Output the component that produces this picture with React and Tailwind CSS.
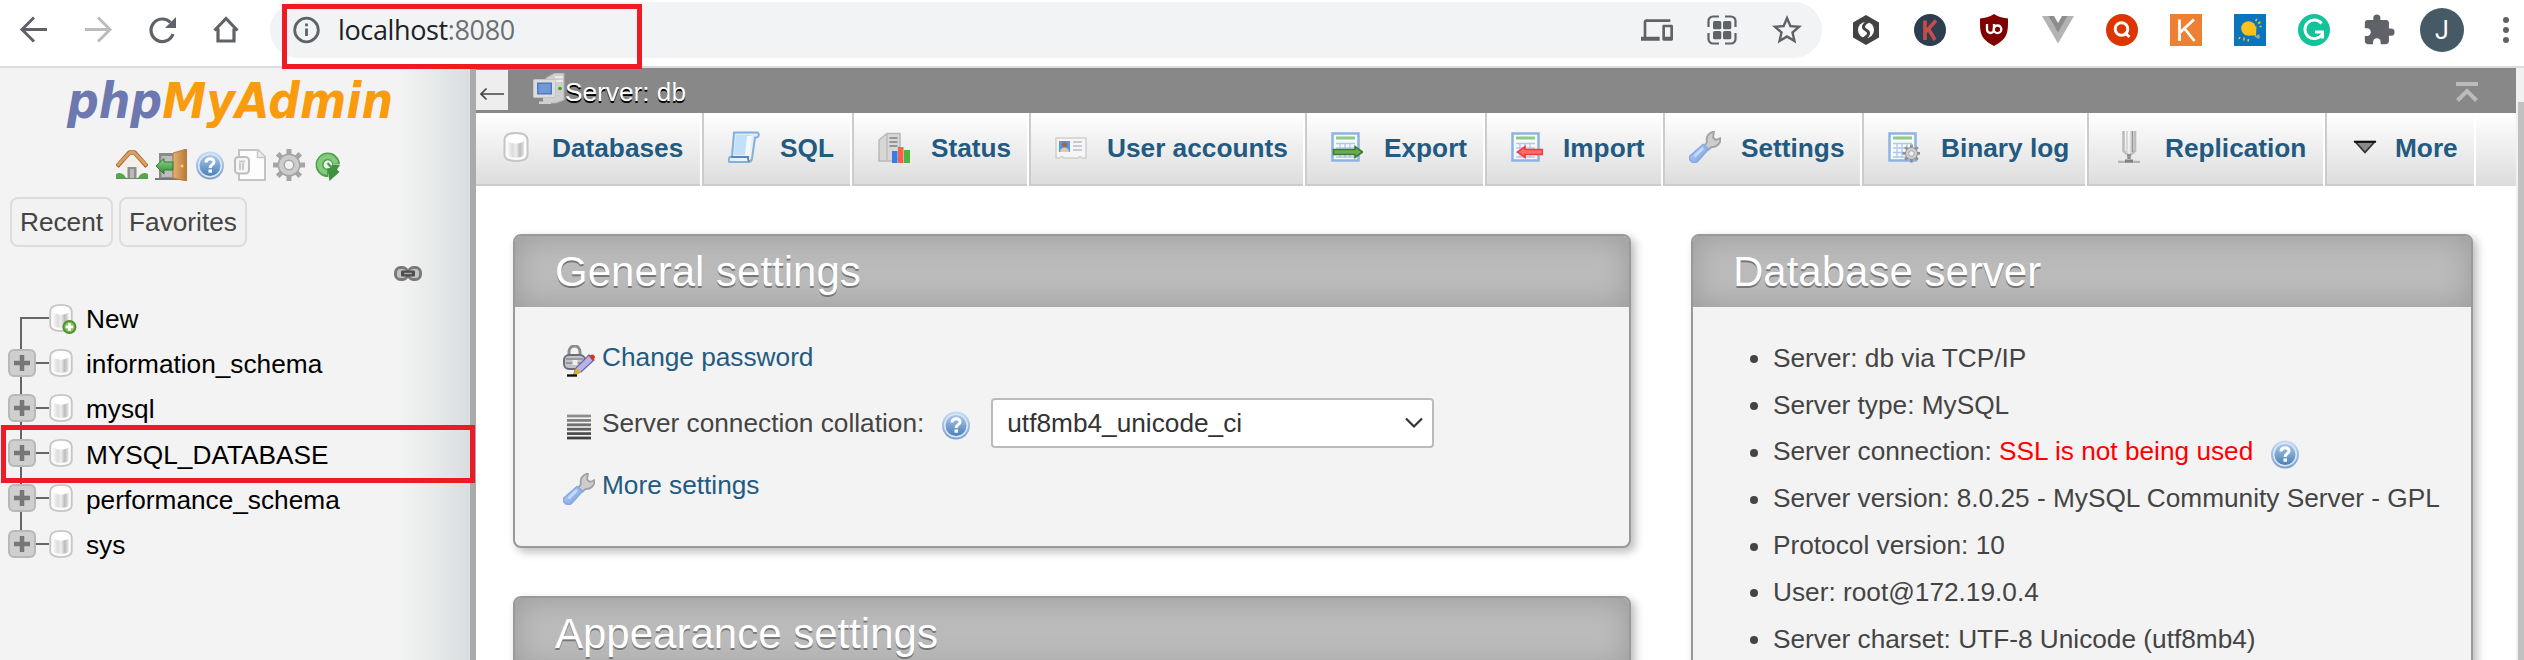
import React from "react";
import { MdExtension, MdOutlineStarBorder, MdDevices } from "react-icons/md";

/* ---------- shared gradients ---------- */
function Defs() {
  return (
    <svg width="0" height="0" className="absolute" aria-hidden="true">
      <defs>
        <linearGradient id="cyl" x1="0" x2="1" y1="0" y2="0">
          <stop offset="0" stopColor="#f4f4f4" />
          <stop offset="0.3" stopColor="#dcdcdc" />
          <stop offset="0.5" stopColor="#efefef" />
          <stop offset="0.75" stopColor="#bcbcbc" />
          <stop offset="1" stopColor="#e4e4e4" />
        </linearGradient>
        <linearGradient id="blueBall" x1="0" x2="0" y1="0" y2="1">
          <stop offset="0" stopColor="#a9c8ea" />
          <stop offset="1" stopColor="#4c80b8" />
        </linearGradient>
        <linearGradient id="blueRing" x1="0" x2="0" y1="0" y2="1">
          <stop offset="0" stopColor="#c6dcf6" />
          <stop offset="1" stopColor="#7d9fc9" />
        </linearGradient>
        <linearGradient id="wood" x1="0" x2="1" y1="0" y2="0">
          <stop offset="0" stopColor="#e5b077" />
          <stop offset="1" stopColor="#b97a35" />
        </linearGradient>
        <linearGradient id="green" x1="0" x2="0" y1="0" y2="1">
          <stop offset="0" stopColor="#8fd58a" />
          <stop offset="1" stopColor="#2f8a35" />
        </linearGradient>
        <linearGradient id="paper" x1="0" x2="1" y1="0" y2="1">
          <stop offset="0" stopColor="#cfe6fb" />
          <stop offset="1" stopColor="#f4faff" />
        </linearGradient>
        <linearGradient id="handle" x1="0" x2="1" y1="0" y2="1">
          <stop offset="0" stopColor="#c4d8f8" />
          <stop offset="1" stopColor="#6f9ae0" />
        </linearGradient>
      </defs>
    </svg>
  );
}

function Ico({ size = "size-8", className = "", children }) {
  return (
    <svg viewBox="0 0 32 32" className={`${size} shrink-0 ${className}`} fill="none">
      {children}
    </svg>
  );
}

/* ---------- phpMyAdmin icons ---------- */
function Cylinder() {
  return (
    <>
      <path d="M4.500 9c0-5 3.500-7 11.500-7s11.500 2 11.500 7v14.500c0 4.500-3.500 6.500-11.500 6.500s-11.500-2-11.500-6.500z" fill="#fbfbfb" stroke="#c6c6c6" strokeWidth="2" />
      <path d="M8 10v13c0 2.500 3 3.500 8 3.500s8-1 8-3.500V10z" fill="url(#cyl)" />
      <ellipse cx="16" cy="8.500" rx="8.500" ry="4" fill="#fff" />
    </>
  );
}
const DbIcon = () => (
  <Ico size="size-[30px]">
    <Cylinder />
  </Ico>
);
const DbTabIcon = () => (
  <Ico>
    <Cylinder />
  </Ico>
);
const DbNewIcon = () => (
  <Ico size="size-[30px]" className="overflow-visible">
    <Cylinder />
    <circle cx="25" cy="25.500" r="7.500" fill="#4f8f2c" />
    <circle cx="25" cy="25.500" r="5.500" fill="#86bf5e" />
    <path d="M25 21.500v8M21 25.500h8" stroke="#fff" strokeWidth="3" />
  </Ico>
);
const HelpIcon = () => (
  <Ico>
    <circle cx="16" cy="16.500" r="14" fill="url(#blueRing)" />
    <circle cx="16" cy="16.500" r="12" fill="#dbe8f7" />
    <circle cx="16" cy="16.500" r="10.500" fill="url(#blueBall)" />
    <path d="M12 13.500c0-5 8-5 8-.6 0 2.700-3.800 2.900-3.800 6" stroke="#fff" strokeWidth="3" />
    <rect x="14.500" y="20.500" width="3.500" height="3.200" fill="#fff" />
  </Ico>
);
const HomeIcon = () => (
  <Ico>
    <path d="M6 16 16 7l10 9v12H6z" fill="#f4efe8" />
    <path d="M11.500 18h9v11h-9z" fill="#8d8d8d" />
    <path d="M14 20h4v9h-4z" fill="#b9b9b9" />
    <path d="M0 25c3-2 6-1 8 1l3 4H0zM32 25c-3-2-6-1-8 1l-3 4h11z" fill="#52a84e" />
    <path d="M1 17.500 13.500 3.500h5L31 17.500" stroke="#a86a2c" strokeWidth="4.500" strokeLinejoin="round" />
    <path d="M1.500 16.500 13.800 3.500h4.400L30.500 16.500" stroke="#d9a066" strokeWidth="2.800" strokeLinejoin="round" />
    <path d="M0 29.500h32" stroke="#6b8d5d" strokeWidth="1" />
  </Ico>
);
const ExitIcon = () => (
  <Ico>
    <path d="M4 4h15v25H4z" fill="#8b8b8b" />
    <path d="M6.500 7h11v21h-11z" fill="#bdbdbd" />
    <path d="M0 30h32" stroke="#777" strokeWidth="2" />
    <path d="M18 4 31.500 0v32L18 29z" fill="url(#wood)" />
    <path d="M18 4 31.500 0v32L18 29z" stroke="#b67c3c" strokeWidth="1" />
    <circle cx="27" cy="17" r="1.500" fill="#ffd34a" />
    <path d="M1 17 9 9.500V13h9v8H9v4z" fill="url(#green)" stroke="#2f7d33" strokeWidth="1" />
  </Ico>
);
const DocIcon = () => (
  <Ico>
    <path d="M5 1h19l7 7v23H5z" fill="#fdfdfd" stroke="#c4c4c4" strokeWidth="2" />
    <path d="M23.500 1v7.500H31" stroke="#c6c6c6" strokeWidth="1.500" fill="#eee" />
    <rect x="1" y="8" width="14" height="16.500" rx="3.500" fill="#f5f5f5" stroke="#bdbdbd" strokeWidth="2" />
    <path d="M5 12.500h6M6 14v7M9 14v7" stroke="#c9c9c9" strokeWidth="2" />
  </Ico>
);
function Gear({ teeth = "#a5a5a5" }) {
  return (
    <>
      <g stroke={teeth} strokeWidth="5">
        <path d="M16 0v32M0 16h32M4.700 4.700l22.600 22.600M27.300 4.700 4.700 27.300" />
      </g>
      <circle cx="16" cy="16" r="11.500" fill={teeth} />
      <circle cx="16" cy="16" r="10" fill="#cdcdcd" />
      <circle cx="16" cy="16" r="5.500" fill="#a8a8a8" />
      <circle cx="16" cy="16" r="4" fill="#f2f2f2" />
    </>
  );
}
const GearIcon = () => (
  <Ico>
    <Gear />
  </Ico>
);
const ReloadGreenIcon = () => (
  <Ico>
    <path d="M24 15.500A8.200 8.200 0 1 0 16 24" stroke="#4f9f4c" strokeWidth="8" />
    <path d="M23.500 14.500A8 8 0 1 0 15 23.500" stroke="#84cb7e" strokeWidth="5" />
    <path d="M15 18.500 18.500 16h9.500l-3 4.500 2.500 2.500-10 9z" fill="#3f913f" />
    <circle cx="16" cy="15.500" r="3.800" fill="#f3f3f3" />
    <path d="m15.500 14 4 4.500" stroke="#4f9f4c" strokeWidth="2.500" />
  </Ico>
);
const LinkIcon = () => (
  <svg viewBox="0 0 28 15" className="h-[15px] w-7" fill="none">
    <rect x="1.500" y="1.500" width="12" height="12" rx="5" fill="#c4c4c4" stroke="#7a7a7a" strokeWidth="3" />
    <rect x="14.500" y="1.500" width="12" height="12" rx="5" fill="#c4c4c4" stroke="#7a7a7a" strokeWidth="3" />
    <rect x="7" y="4.500" width="14" height="6" rx="1" fill="#4e4e4e" />
    <path d="M10 7.500h8" stroke="#a5a5a5" strokeWidth="1.500" />
  </svg>
);
const ServerIcon = () => (
  <Ico>
    <path d="M13 5 22 0h9v27l-8 3H13z" fill="#cfcfcf" stroke="#b2b2b2" strokeWidth="1" />
    <path d="M22 4h8M22 8h8" stroke="#f5f5f5" strokeWidth="1.500" />
    <circle cx="27" cy="15.500" r="1.800" fill="#27a827" />
    <rect x="0.500" y="6.500" width="22" height="18" rx="1" fill="#dcdcdc" stroke="#c3c3c3" />
    <rect x="4" y="9.500" width="15" height="12" fill="#4d7ac0" />
    <path d="M5.500 11h12v9h-12z" fill="#7299d6" />
    <path d="M10 24.500h4v4h4V31H6v-2.500h4z" fill="#d0d0d0" />
  </Ico>
);
const SqlIcon = () => (
  <Ico>
    <path d="M6 1.500h23c2.500 0 2.500 5-1 5h-1l-3 21c-.5 3-2 3.500-4 3.500H2c-2 0-1.500-5.500 1-5.500h1z" fill="url(#paper)" stroke="#86addb" strokeWidth="2" />
    <path d="M3 26h17c0 2 0 4 1.500 4.500" stroke="#5a86bd" strokeWidth="2" />
    <path d="M8 4h15l-3 20H6z" fill="#c3e0fa" />
    <path d="M19 5h5l-3 19h-4z" fill="#f3f9ff" />
  </Ico>
);
const StatusIcon = () => (
  <Ico>
    <path d="M1 9 9 2.500h13V26l-4 4H1z" fill="#d7d7d7" stroke="#b9b9b9" strokeWidth="1.500" />
    <path d="M9 3v26" stroke="#bdbdbd" strokeWidth="1.500" />
    <path d="M11.500 7h8M11.500 11h8M11.500 15h8" stroke="#959595" strokeWidth="2" />
    <rect x="14" y="20" width="5.500" height="12" fill="#3c7be6" />
    <rect x="20" y="16" width="5.500" height="16" fill="#f5624a" />
    <rect x="26" y="19" width="6" height="13" fill="#4bb53c" />
  </Ico>
);
const UserIcon = () => (
  <Ico>
    <path d="M1 7h30v20h-4l-2-1.500-2 1.500H9l-2-1.500L5 27H1z" fill="#f6f6f6" stroke="#d0d0d0" strokeWidth="1.500" />
    <rect x="4" y="10" width="11" height="11" fill="#4c9aea" />
    <circle cx="9.500" cy="13.500" r="2.600" fill="#a8683a" />
    <path d="M5 21c0-6 9-6 9 0z" fill="#e8c6a8" />
    <path d="M18 11h9M18 15h9M18 19h9" stroke="#c5ccd4" strokeWidth="1.800" />
  </Ico>
);
function Sheet() {
  return (
    <>
      <rect x="1.500" y="2.500" width="26" height="27" fill="#f6faff" stroke="#8fb2e4" strokeWidth="2.500" />
      <rect x="5" y="5.500" width="19" height="3" fill="#92c97f" />
      <path d="M5 12.500h19M5 17h19M5 21.500h19M5 26h19M9 12v15M14 12v15M19 12v15" stroke="#b2c8ea" strokeWidth="1.400" />
    </>
  );
}
const ExportIcon = () => (
  <Ico>
    <Sheet />
    <path d="M2.500 18.500H24v-3l7.500 5.500-7.500 5.500v-3H2.500z" fill="#69a957" stroke="#3c7d2f" strokeWidth="1.600" />
  </Ico>
);
const ImportIcon = () => (
  <Ico>
    <Sheet />
    <path d="M31.500 18.500H14v-3L6.500 21l7.500 5.500v-3h17.500z" fill="#ff6b66" stroke="#ee3b3b" strokeWidth="1.600" />
  </Ico>
);
const WrenchIcon = () => (
  <Ico>
    <path d="M15 15.500 18 11c-1.500-5 1.500-9.500 7-10.500l-1 6 3 2.500 4.500-2c.5 5.500-4 9.500-9 9l-3.500 3z" fill="#cdcdcd" stroke="#a2a2a2" strokeWidth="1.800" strokeLinejoin="round" />
    <path d="M14 13.500 19.500 18 9 30c-2 2-5 1.500-6.500.5C0 28.500-.500 26.500 1.500 24.500z" fill="url(#handle)" stroke="#86a8e3" strokeWidth="1.600" />
    <path d="M5.500 25.500 14 17" stroke="#c9dbf9" strokeWidth="2.500" />
  </Ico>
);
const BinlogIcon = () => (
  <Ico>
    <Sheet />
    <g transform="translate(14.500 13.500) scale(0.56)">
      <Gear teeth="#8f8f8f" />
    </g>
  </Ico>
);
const ReplicationIcon = () => (
  <Ico>
    <path d="M10.500 0v20l5.500 5 6-5V0" stroke="#bdbdbd" strokeWidth="2.600" />
    <path d="M14 0v22M18 0v22" stroke="#d6d6d6" strokeWidth="1.800" />
    <path d="M19.500 0v21" stroke="#949494" strokeWidth="1.500" />
    <path d="M16 23v5" stroke="#8f8f8f" strokeWidth="3.500" />
    <path d="M5 31h22" stroke="#b4b4b4" strokeWidth="2.500" />
    <path d="M12 30h8" stroke="#808080" strokeWidth="3" />
  </Ico>
);
const MoreIcon = () => (
  <Ico>
    <path d="M6.500 11h19L16 21.500z" fill="#8a8a8a" stroke="#333" strokeWidth="1.800" />
    <path d="M5 10.700h22" stroke="#111" strokeWidth="2" />
  </Ico>
);
const PasswordIcon = () => (
  <Ico>
    <path d="M6 11V7c0-8 11-8 11 0v4" stroke="#8d8d94" strokeWidth="3" />
    <rect x="1" y="10" width="21" height="14" rx="5" fill="#c3c3cb" stroke="#6d6d76" strokeWidth="2" />
    <path d="M3 14h17M3 18h17" stroke="#8a8a94" strokeWidth="1.500" />
    <path d="M9.500 15h5v5h-5z" fill="#eee" />
    <path d="M11 29l2-6L26 10l5 5-13 12z" fill="#b9b3ea" stroke="#6d68a8" strokeWidth="1.300" />
    <path d="M26 11l3-1.500c2 0 3 1.500 3 3L29.500 16z" fill="#d8361c" />
    <path d="M10 31l3-8 5.500 4.500z" fill="#d6b12c" />
    <path d="M4 30.500h10" stroke="#111" strokeWidth="2.400" />
  </Ico>
);
const CollationIcon = () => (
  <Ico>
    <path d="M4 5h24" stroke="#8d8d8d" strokeWidth="2.800" />
    <path d="M4 9.400h24" stroke="#808080" strokeWidth="2.800" />
    <path d="M4 13.800h24" stroke="#707070" strokeWidth="2.800" />
    <path d="M4 18.200h24" stroke="#606060" strokeWidth="2.800" />
    <path d="M4 22.600h24" stroke="#505050" strokeWidth="2.800" />
    <path d="M4 27h24" stroke="#404040" strokeWidth="2.800" />
  </Ico>
);

/* ---------- browser toolbar ---------- */
function NavButtons() {
  return (
    <div className="flex w-[270px] items-center gap-8 pl-[18px]">
      <Ico>
        <path d="M29 15.500H5M16 3.500l-12 12 12 12" stroke="#5f6368" strokeWidth="3" />
      </Ico>
      <Ico>
        <path d="M3 15.500h24M16 3.500l12 12-12 12" stroke="#babcbe" strokeWidth="3" />
      </Ico>
      <Ico>
        <path d="M27 20A11.300 11.300 0 1 1 24.500 8.500" stroke="#5f6368" strokeWidth="3.200" />
        <path d="M30 3v11H19z" fill="#5f6368" />
      </Ico>
      <Ico>
        <path d="M4.500 16.500 16 4.500l11.500 12M8 14.500V27h16V14.500" stroke="#5f6368" strokeWidth="3.200" />
      </Ico>
    </div>
  );
}

function AddressBar() {
  return (
    <div className="flex h-14 w-[1552px] items-center rounded-full bg-[#f1f3f4] pl-5">
      <Ico>
        <circle cx="16.500" cy="16" r="11.800" stroke="#5f6368" strokeWidth="2.800" />
        <path d="M16.500 14.500V22M16.500 9.500v2.800" stroke="#5f6368" strokeWidth="2.800" />
      </Ico>
      <div className="flex-1 pl-4 font-['Open_Sans',sans-serif] text-[27px] leading-8 text-[#202124]">
        <span className="tracking-[-0.37px]">
          localhost<span className="text-[#6b6f73]">:8080</span>
        </span>
      </div>
      <div className="flex items-center pr-[17px]">
        <MdDevices className="size-8 text-[#5f6368]" />
        <Ico className="ml-[33px]">
          <path d="M13 2.500H7A4.500 4.500 0 0 0 2.500 7v6M19 2.500h6A4.500 4.500 0 0 1 29.500 7v6M13 29.500H7A4.500 4.500 0 0 1 2.500 25v-6M19 29.500h6a4.500 4.500 0 0 0 4.500-4.500v-6" stroke="#5f6368" strokeWidth="2.200" />
          <g fill="#5f6368">
            <rect x="7" y="7" width="8.300" height="8.300" rx="1.500" />
            <rect x="17" y="7" width="8.300" height="8.300" rx="1.500" />
            <rect x="7" y="17" width="8.300" height="8.300" rx="1.500" />
            <rect x="17" y="17" width="8.300" height="8.300" rx="1.500" />
          </g>
        </Ico>
        <MdOutlineStarBorder className="ml-[31px] size-9 text-[#5f6368]" />
      </div>
    </div>
  );
}

function Extensions() {
  return (
    <div className="flex items-center gap-8 pl-7">
      <Ico>
        <path d="M16 1 29 8.500v15L16 31 3 23.500v-15z" fill="#434343" />
        <circle cx="16" cy="16" r="8" fill="#fff" />
        <path d="M20 6.500C13 10 11.500 13.500 16 16s3 6-4 9.500" stroke="#434343" strokeWidth="3" />
      </Ico>
      <Ico>
        <circle cx="16" cy="16" r="16" fill="#2c3e50" />
        <path d="M11 6.500 11 26M22 6.500 12 17.500M14.500 15 21 26" stroke="#c94c4c" strokeWidth="3.600" />
      </Ico>
      <Ico>
        <path d="M16 0c4.500 3 9.500 4 14 4.500 0 13 .5 20-14 27.500C1.500 24.500 2 17.500 2 4.500 6.500 4 11.500 3 16 0z" fill="#800000" />
        <path d="M9 10v5.500a3.500 3.500 0 0 0 7 0V10" stroke="#fff" strokeWidth="2.300" />
        <circle cx="19.500" cy="15.300" r="3.800" stroke="#fff" strokeWidth="2.300" />
      </Ico>
      <Ico>
        <path d="M0 2h7l9 15.500L25 2h7L16 29.500z" fill="#b3b3b3" />
        <path d="M6.500 2H12l4 7 4-7h5.500L16 18.500z" fill="#8d8d8d" />
      </Ico>
      <Ico>
        <circle cx="16" cy="16" r="16" fill="#dc3500" />
        <circle cx="15.500" cy="15" r="6.300" stroke="#fff" strokeWidth="3" />
        <path d="m18.500 18.500 5 4.500" stroke="#fff" strokeWidth="3" />
      </Ico>
      <Ico>
        <rect width="32" height="32" fill="#ee7f33" />
        <path d="M9.500 5.500v21.500M24 5.500 10 18.500M14.500 14.500l10 12.500" stroke="#fff" strokeWidth="2.800" />
      </Ico>
      <Ico>
        <rect width="32" height="32" fill="#0a74bc" />
        <circle cx="14.500" cy="14.500" r="7.300" fill="#fcc21b" />
        <path d="m13 21 9 .8L22.500 12z" fill="#fcc21b" />
        <path d="m20.500 22.500 4.500-2.500 1.300 3.500-2.300 1.500z" fill="#8fa3ad" />
        <path d="m21.500 7 1.500-2M24 9.500l2.500-1.500M25.500 12.500h2M6 23l-1 2M10 23.500v3M14.500 25l-.5 2.500" stroke="#fcc21b" strokeWidth="1.500" />
      </Ico>
      <Ico>
        <circle cx="16" cy="16" r="16" fill="#15c39a" />
        <path d="M23.500 9.500A9.300 9.300 0 1 0 24 20.500M17 18h7.500v6.500" stroke="#fff" strokeWidth="2.900" />
      </Ico>
      <MdExtension className="size-[34px] text-[#5f6368]" />
      <svg viewBox="0 0 44 44" className="-ml-2 size-11">
        <circle cx="22" cy="22" r="22" fill="#455a64" />
        <text x="22" y="31" textAnchor="middle" fill="#fff" fontFamily="Roboto, sans-serif" fontSize="25">J</text>
      </svg>
      <div className="ml-[7px] flex flex-col gap-1">
        <span className="size-1.5 rounded-full bg-[#5f6368]" />
        <span className="size-1.5 rounded-full bg-[#5f6368]" />
        <span className="size-1.5 rounded-full bg-[#5f6368]" />
      </div>
    </div>
  );
}

function BrowserBar() {
  return (
    <header className="flex h-[68px] shrink-0 items-center overflow-hidden border-b-2 border-[#dadce3] bg-white pb-1.5">
      <NavButtons />
      <AddressBar />
      <Extensions />
    </header>
  );
}

/* ---------- navigation sidebar ---------- */
const databases = ["information_schema", "mysql", "MYSQL_DATABASE", "performance_schema", "sys"];

function Expander() {
  return (
    <svg viewBox="0 0 28 28" className="relative z-10 size-7 shrink-0">
      <rect x="1" y="1" width="26" height="26" rx="5" fill="#cfcfcf" stroke="#b8b8b8" strokeWidth="2" />
      <path d="M14 6v16M6 14h16" stroke="#777" strokeWidth="4.500" />
    </svg>
  );
}

function TreeRow({ name, last }) {
  return (
    <li className="relative flex h-[45.200px] items-center pl-2">
      <span className={`absolute left-5 top-0 w-0.5 bg-[#666] ${last ? "h-1/2" : "h-full"}`} />
      <Expander />
      <span className="h-0.5 w-[13px] bg-[#666]" />
      <span className="-ml-[3px] flex">
        <DbIcon />
      </span>
      <span className="pl-2.5 pt-[3px] leading-none">{name}</span>
    </li>
  );
}

function Sidebar() {
  return (
    <aside className="flex w-[476px] shrink-0 flex-col border-r-[6px] border-[#aaa] bg-[linear-gradient(90deg,#f3f3f3_0px,#f3f3f3_398px,#e9ebeb_430px,#d9dddf_470px)] text-black">
      <svg viewBox="0 -8 340 70" className="ml-[65px] h-[70px] w-[340px] shrink-0">
        <text x="2" y="42" textLength="326" lengthAdjust="spacingAndGlyphs" fontFamily="'DejaVu Sans', sans-serif" fontSize="50" fontWeight="bold" fontStyle="italic">
          <tspan fill="#6c78af">php</tspan>
          <tspan fill="#f89c0e">MyAdmin</tspan>
        </text>
      </svg>
      <div className="mt-[11px] flex gap-[7.200px] pl-[116px]">
        <HomeIcon />
        <ExitIcon />
        <HelpIcon />
        <DocIcon />
        <GearIcon />
        <ReloadGreenIcon />
      </div>
      <div className="mt-4 flex gap-1.5 pl-2.5 text-[#444]">
        <button className="h-[50px] w-[103px] rounded-lg border-2 border-[#ddd] bg-[#f2f2f2] pt-0.5">Recent</button>
        <button className="h-[50px] w-32 rounded-lg border-2 border-[#ddd] bg-[#f2f2f2] pt-0.5">Favorites</button>
      </div>
      <div className="mt-[19px] flex justify-end pr-12">
        <LinkIcon />
      </div>
      <ul className="mt-[14px]">
        <li className="relative flex h-[45.200px] items-center pl-5">
          <span className="absolute bottom-0 left-5 h-1/2 w-0.5 bg-[#666]" />
          <span className="h-0.5 w-[29px] bg-[#666]" />
          <span className="-ml-[3px] flex">
            <DbNewIcon />
          </span>
          <span className="pl-2.5 pt-[3px] leading-none">New</span>
        </li>
        {databases.map((name, i) => (
          <TreeRow key={name} name={name} last={i === databases.length - 1} />
        ))}
      </ul>
    </aside>
  );
}

/* ---------- main area ---------- */
function ServerBar() {
  return (
    <div className="flex h-[45px] shrink-0 items-center bg-[#888]">
      <div className="mb-px flex h-10 w-8 items-center justify-center bg-[#eee]">
        <svg viewBox="0 0 26 16" className="mt-2 h-4 w-[26px]" fill="none">
          <path d="M25 8H2M7.500 2.500 2 8l5.500 5.500" stroke="#444" strokeWidth="1.700" />
        </svg>
      </div>
      <div className="flex items-start pl-[25px]">
        <span className="-mt-0.5 flex">
          <ServerIcon />
        </span>
        <span className="pt-0.5 leading-[30px] text-white [text-shadow:0_2px_0_#000]">Server: db</span>
      </div>
      <svg viewBox="0 0 22 20" className="ml-auto mr-[38px] mt-0.5 h-5 w-[22px]" fill="none">
        <path d="M0 2h22M1.500 18.500 11 9l9.500 9.500" stroke="#bbb" strokeWidth="4" />
      </svg>
    </div>
  );
}

const tabs = [
  { label: "Databases", Icon: DbTabIcon, box: "w-[226px] border-l-0", gap: "pr-5" },
  { label: "SQL", Icon: SqlIcon, box: "w-[150px] border-l-2", gap: "pr-5" },
  { label: "Status", Icon: StatusIcon, box: "w-[177px] border-l-2", gap: "pr-[21px]" },
  { label: "User accounts", Icon: UserIcon, box: "w-[276px] border-l-2", gap: "pr-5" },
  { label: "Export", Icon: ExportIcon, box: "w-[180px] border-l-2", gap: "pr-[21px]" },
  { label: "Import", Icon: ImportIcon, box: "w-[178px] border-l-2", gap: "pr-5" },
  { label: "Settings", Icon: WrenchIcon, box: "w-[199px] border-l-2", gap: "pr-5" },
  { label: "Binary log", Icon: BinlogIcon, box: "w-[225px] border-l-2", gap: "pr-[21px]" },
  { label: "Replication", Icon: ReplicationIcon, box: "w-[238px] border-l-2", gap: "pr-5" },
  { label: "More", Icon: MoreIcon, box: "w-[151px] border-l-2", gap: "-ml-0.5 pr-3.5" },
];

function TabBar() {
  return (
    <nav className="flex h-[73px] shrink-0 bg-[linear-gradient(#fff,#dcdcdc)]">
      {tabs.map(({ label, Icon, box, gap }) => (
        <a
          key={label}
          className={`${box} flex items-center whitespace-nowrap border-y-0 border-l-[#ccc] font-bold text-[#235a81] shadow-[inset_-2px_0_0_#fff,inset_0_-2px_0_#ccc]`}
        >
          <span className={`flex pb-1.5 pl-6 ${gap}`}>
            <Icon />
          </span>
          <span className="-mt-0.5">{label}</span>
        </a>
      ))}
    </nav>
  );
}

function Card({ title, className, children }) {
  return (
    <section className={`overflow-hidden rounded-lg border-2 border-[#999] bg-[#f3f3f3] shadow-[4px_4px_10px_#bbb] ${className}`}>
      <h2 className="h-[71px] bg-[#bbb] pl-10 text-[42px] leading-[71px] text-white shadow-[inset_0_0_30px_#999] [text-shadow:0_2px_0_#777]">
        {title}
      </h2>
      {children}
    </section>
  );
}

function GeneralSettings() {
  return (
    <Card title="General settings" className="h-[314px]">
      <ul className="pl-12">
        <li className="mt-8 flex h-10 items-center text-[#235a81]">
          <span className="mr-[7px] mt-1 flex">
            <PasswordIcon />
          </span>
          <span className="-mt-0.5">Change password</span>
        </li>
        <li className="mt-[19px] flex h-[50px] items-center">
          <span className="mr-[7px] mt-2 flex">
            <CollationIcon />
          </span>
          <span className="mt-0.5">Server connection collation:</span>
          <span className="ml-4 mt-1 flex">
            <HelpIcon />
          </span>
          <div className="ml-[19px] flex h-[50px] w-[443px] items-center justify-between rounded border-2 border-[#bbb] bg-white pl-3.5 pr-[9px] text-[#333]">
            <span className="mt-0.5">utf8mb4_unicode_ci</span>
            <svg viewBox="0 0 18 12" className="h-3 w-[18px]" fill="none">
              <path d="m1 1.500 8 8 8-8" stroke="#333" strokeWidth="2.200" />
            </svg>
          </div>
        </li>
        <li className="mt-[19px] flex h-10 items-center text-[#235a81]">
          <span className="mr-[7px] mt-1 flex">
            <WrenchIcon />
          </span>
          <span className="-mt-0.5">More settings</span>
        </li>
      </ul>
    </Card>
  );
}

const serverFacts = [
  "Server: db via TCP/IP",
  "Server type: MySQL",
  null,
  "Server version: 8.0.25 - MySQL Community Server - GPL",
  "Protocol version: 10",
  "User: root@172.19.0.4",
  "Server charset: UTF-8 Unicode (utf8mb4)",
];

function DatabaseServer() {
  return (
    <Card title="Database server" className="h-[600px] w-[782px]">
      <ul className="pl-[57px] pt-7">
        {serverFacts.map((fact, i) => (
          <li key={i} className="flex h-[46.800px] items-center whitespace-nowrap">
            <span className="mr-[15px] mt-0.5 size-2 rounded-full bg-[#444]" />
            {fact || (
              <>
                Server connection:&nbsp;<span className="text-[#f00]">SSL is not being used</span>
                <span className="ml-4 mt-1 flex">
                  <HelpIcon />
                </span>
              </>
            )}
          </li>
        ))}
      </ul>
    </Card>
  );
}

export default function App() {
  return (
    <div className="relative flex h-[660px] w-[2524px] flex-col overflow-hidden bg-white font-['Liberation_Sans',Arial,sans-serif] text-[26.240px] text-[#444]">
      <Defs />
      <BrowserBar />
      <div className="flex min-h-0 flex-1">
        <Sidebar />
        <main className="flex w-[2040px] flex-col overflow-hidden">
          <ServerBar />
          <TabBar />
          <div className="flex items-start pl-[37px] pt-12">
            <div className="flex w-[1118px] flex-col gap-12">
              <GeneralSettings />
              <Card title="Appearance settings" className="h-[300px]" />
            </div>
            <div className="ml-[60px]">
              <DatabaseServer />
            </div>
          </div>
        </main>
        <div className="flex w-2 flex-col bg-[#f1f1f1] pl-0.5 pt-[34px]">
          <div className="flex-1 bg-[#c1c1c1]" />
        </div>
      </div>
      <div className="absolute left-[282px] top-1 z-20 h-[65px] w-[360px] border-[5px] border-[#ed1c24]" />
      <div className="absolute left-px top-[425px] z-20 h-[58px] w-[474px] border-[5px] border-[#ed1c24]" />
    </div>
  );
}
